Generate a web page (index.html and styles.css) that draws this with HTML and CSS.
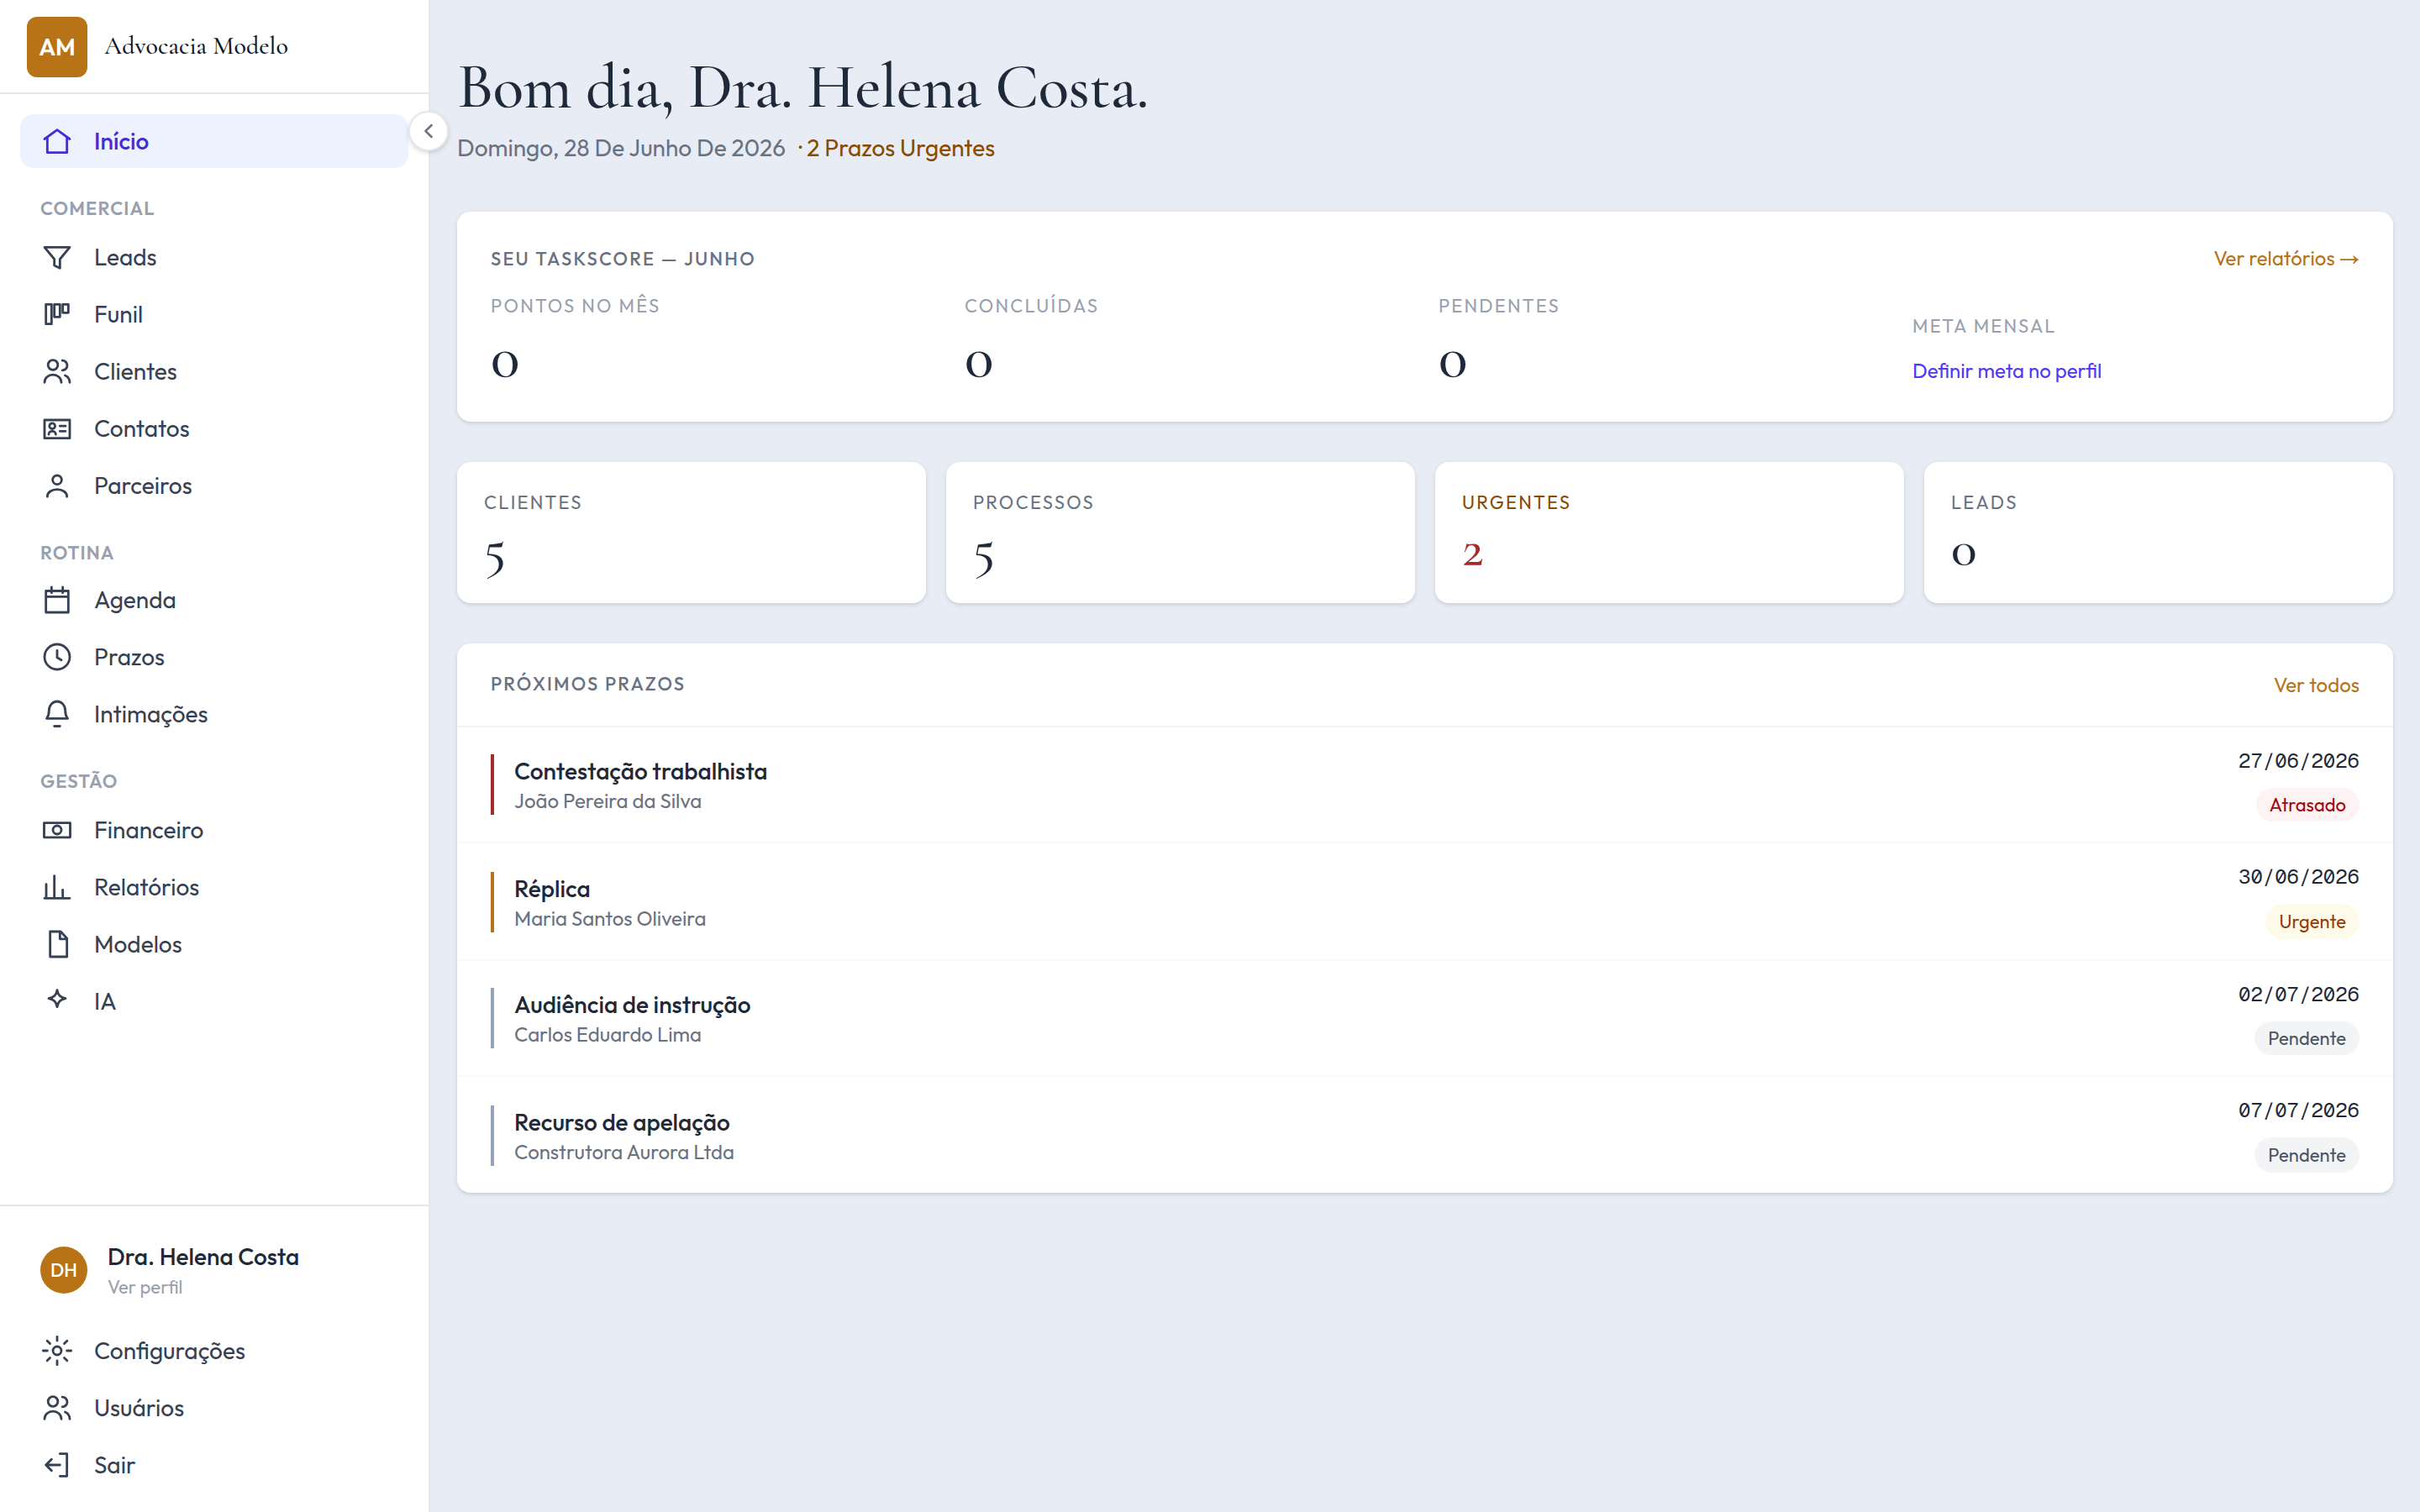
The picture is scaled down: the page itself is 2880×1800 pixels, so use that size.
FILE: index.html
```html
<!DOCTYPE html>
<html lang="pt-BR">
<head>
<meta charset="utf-8">
<title>Advocacia Modelo</title>
<link rel="stylesheet" href="styles.css">
</head>
<body>
<aside class="sidebar">
  <header class="brand"><span class="logo">AM</span><span class="brand-name">Advocacia Modelo</span></header>
  <button class="collapse" aria-label="Recolher"><svg viewBox="0 0 24 24"><path d="M15 6l-6 6 6 6"/></svg></button>
  <nav class="nav">
    <a class="item active"><svg viewBox="0 0 24 24"><path d="M3 10.5L12 4l9 6.5M5 9.5V20.2h14V9.5"/></svg>Início</a>
    <h2 class="group">Comercial</h2>
    <a class="item"><svg viewBox="0 0 24 24"><path d="M3 5h18l-7 8.5V20l-4-2v-4.500z"/></svg>Leads</a>
    <a class="item"><svg viewBox="0 0 24 24"><path d="M4 5h4v14H4zM10 5h4v9h-4zM16 5h4v6h-4z"/></svg>Funil</a>
    <a class="item"><svg viewBox="0 0 24 24"><circle cx="9" cy="7.500" r="3.500"/><path d="M3 20c0-3.300 2.700-5.500 6-5.500s6 2.200 6 5.500M15.700 4.300a3.500 3.500 0 0 1 0 7M17.700 15c2 .8 3.300 2.600 3.300 5"/></svg>Clientes</a>
    <a class="item"><svg viewBox="0 0 24 24"><path d="M3 6h18v13H3z"/><circle cx="8.500" cy="10.300" r="2"/><path d="M6 16.300c0-1.400 1.100-2.300 2.500-2.300s2.500.9 2.500 2.300M14 10.300h4M14 14h4"/></svg>Contatos</a>
    <a class="item"><svg viewBox="0 0 24 24"><circle cx="12" cy="8" r="3.200"/><path d="M5 20c0-3.200 3.100-5.200 7-5.200s7 2 7 5.200"/></svg>Parceiros</a>
    <h2 class="group short">Rotina</h2>
    <a class="item"><svg viewBox="0 0 24 24"><path d="M4 5.700h16V21H4zM4 9.800h16M8 3v4M16 3v4"/></svg>Agenda</a>
    <a class="item"><svg viewBox="0 0 24 24"><circle cx="12" cy="12" r="9"/><path d="M12 7.500v5l3 1.800"/></svg>Prazos</a>
    <a class="item"><svg viewBox="0 0 24 24"><path d="M4.500 15.200c1.200-1.500 1.700-3.400 1.700-5.700a5.800 6.500 0 0 1 11.600 0c0 2.300.5 4.200 1.700 5.700zM10 20.700h4"/></svg>Intimações</a>
    <h2 class="group">Gestão</h2>
    <a class="item"><svg viewBox="0 0 24 24"><path d="M2.700 7h18.600v10.300H2.700z"/><circle cx="12" cy="12" r="3"/></svg>Financeiro</a>
    <a class="item"><svg viewBox="0 0 24 24"><path d="M3 20h18M4.200 20V10M10 20V4M16 20v-6"/></svg>Relatórios</a>
    <a class="item"><svg viewBox="0 0 24 24"><path d="M7 3h7.500L19 7.800V21H7zM14 3v5.300h5"/></svg>Modelos</a>
    <a class="item"><svg viewBox="0 0 24 24"><path d="M12 4c.6 3.500 2 5.200 6 6-4 .8-5.400 2.500-6 6-.6-3.500-2-5.200-6-6 4-.8 5.400-2.500 6-6z"/></svg>IA</a>
  </nav>
  <footer class="account">
    <a class="user"><span class="avatar">DH</span><span class="who"><strong>Dra. Helena Costa</strong><small>Ver perfil</small></span></a>
    <a class="item"><svg viewBox="0 0 24 24"><circle cx="12" cy="12" r="3"/><path d="M12 2v2.800M12 19.200V22M2 12h3M19 12h3M4.900 4.900l2 2M17.100 17.100l2 2M4.900 19.100l2-2M17.100 6.900l2-2"/></svg>Configurações</a>
    <a class="item"><svg viewBox="0 0 24 24"><circle cx="9" cy="7.500" r="3.500"/><path d="M3 20c0-3.300 2.700-5.500 6-5.500s6 2.200 6 5.500M15.700 4.300a3.500 3.500 0 0 1 0 7M17.700 15c2 .8 3.300 2.600 3.300 5"/></svg>Usuários</a>
    <a class="item"><svg viewBox="0 0 24 24"><path d="M14 4h5v16h-5M14 12H4M8 8l-4 4 4 4"/></svg>Sair</a>
  </footer>
</aside>
<main class="main">
  <h1>Bom dia, Dra. Helena Costa.</h1>
  <p class="today">Domingo, 28 De Junho De 2026 <span class="alert">· 2 Prazos Urgentes</span></p>

  <section class="card score">
    <div class="head"><h3>Seu TaskScore — Junho</h3><a class="link">Ver relatórios <span class="arrow">→</span></a></div>
    <div class="metrics">
      <div><div class="label">Pontos no mês</div><div class="value">0</div></div>
      <div><div class="label">Concluídas</div><div class="value">0</div></div>
      <div><div class="label">Pendentes</div><div class="value">0</div></div>
      <div><div class="label">Meta mensal</div><a class="goal">Definir meta no perfil</a></div>
    </div>
  </section>

  <section class="stats">
    <div class="card stat"><div class="label">Clientes</div><div class="value">5</div></div>
    <div class="card stat"><div class="label">Processos</div><div class="value">5</div></div>
    <div class="card stat urgent"><div class="label">Urgentes</div><div class="value">2</div></div>
    <div class="card stat"><div class="label">Leads</div><div class="value">0</div></div>
  </section>

  <section class="card deadlines">
    <div class="head"><h3>Próximos prazos</h3><a class="link">Ver todos</a></div>
    <div class="row"><div class="case late"><b>Contestação trabalhista</b><span>João Pereira da Silva</span></div><div class="due"><time>27/06/2026</time><span class="badge red">Atrasado</span></div></div>
    <div class="row"><div class="case soon"><b>Réplica</b><span>Maria Santos Oliveira</span></div><div class="due"><time>30/06/2026</time><span class="badge amber">Urgente</span></div></div>
    <div class="row"><div class="case"><b>Audiência de instrução</b><span>Carlos Eduardo Lima</span></div><div class="due"><time>02/07/2026</time><span class="badge">Pendente</span></div></div>
    <div class="row"><div class="case"><b>Recurso de apelação</b><span>Construtora Aurora Ltda</span></div><div class="due"><time>07/07/2026</time><span class="badge">Pendente</span></div></div>
  </section>
</main>
</body>
</html>
```
FILE: styles.css
```css
* { box-sizing: border-box; margin: 0; padding: 0; }
body {
  display: flex;
  width: 2880px;
  height: 1800px;
  overflow: hidden;
  background: #e8edf5;
  color: #1e2939;
  font: 400 28px/40px Outfit, Lato, sans-serif;
}
svg { fill: none; stroke: currentColor; stroke-width: 1.7; stroke-linecap: round; stroke-linejoin: round; }

.sidebar {
  position: relative;
  flex: none;
  display: flex;
  flex-direction: column;
  width: 512px;
  background: #fff;
  border-right: 2px solid #e5e7eb;
}
.brand {
  display: flex;
  align-items: center;
  gap: 20px;
  height: 112px;
  padding: 0 32px;
  border-bottom: 2px solid #e5e7eb;
}
.logo {
  display: grid;
  place-items: center;
  width: 72px;
  height: 72px;
  margin-top: 2px;
  border-radius: 12px;
  background: #b87316;
  color: #fff;
  font-weight: 600;
}
.brand-name { color: #101828; font: 500 30px/40px "Cormorant Garamond", "Liberation Serif", serif; }
.collapse {
  position: absolute;
  top: 132px;
  right: -24px;
  display: grid;
  place-items: center;
  width: 48px;
  height: 48px;
  border: 2px solid #e5e7eb;
  border-radius: 50%;
  background: #fff;
  color: #6a7282;
  box-shadow: 0 2px 6px rgba(0, 0, 0, .1), 0 2px 4px rgba(0, 0, 0, .06);
}
.collapse svg { width: 28px; height: 28px; stroke-width: 2.2; }
.nav { flex: 1; padding: 24px; }
.item {
  display: flex;
  align-items: center;
  gap: 24px;
  height: 64px;
  margin-bottom: 4px;
  padding: 0 24px;
  border-radius: 16px;
  color: #364153;
}
.item svg { flex: none; width: 40px; height: 40px; }
.item.active { background: #eef2ff; color: #432dd7; font-weight: 500; }
.item:has(+ .group) { margin-bottom: 0; }
.group {
  height: 74px;
  padding: 32px 24px 0;
  color: #99a1af;
  font-size: 22px;
  font-weight: 600;
  line-height: 32px;
  letter-spacing: 1.1px;
  text-transform: uppercase;
}
.group.short { height: 72px; }

.account { height: 366px; padding: 32px 24px 0; border-top: 2px solid #e5e7eb; }
.user { display: flex; align-items: center; gap: 24px; height: 88px; margin-bottom: 20px; padding: 0 24px; }
.avatar {
  display: grid;
  place-items: center;
  width: 56px;
  height: 56px;
  border-radius: 50%;
  background: #b87316;
  color: #fff;
  font-size: 22px;
  font-weight: 500;
}
.who { display: grid; }
.who strong { font-weight: 500; line-height: 40px; }
.who small { color: #99a1af; font-size: 22px; line-height: 32px; }

.main { flex: 1; padding: 62px 32px 0; }
h1 { font: 500 76px/82px "Cormorant Garamond", "Liberation Serif", serif; letter-spacing: -.76px; }
.today { margin: 12px 0 56px; color: #6a7282; }
.alert { margin-left: 10px; color: #894b00; }
.card {
  border-radius: 16px;
  background: #fff;
  box-shadow: 0 2px 6px rgba(0, 0, 0, .1), 0 2px 4px -2px rgba(0, 0, 0, .1);
}
.head { display: flex; justify-content: space-between; align-items: center; }
h3 { color: #6a7282; font-size: 22px; font-weight: 500; line-height: 32px; letter-spacing: 2.2px; text-transform: uppercase; }
.link { color: #b87316; font-size: 24px; line-height: 32px; }
.arrow { font-family: "Noto Sans Math", "DejaVu Sans", sans-serif; line-height: 1; }
.label { color: #6a7282; font-size: 22px; line-height: 32px; letter-spacing: 2.2px; text-transform: uppercase; }
.value { font: 500 72px/72px "Cormorant Garamond", "Liberation Serif", serif; }

.score { height: 250px; padding: 40px; }
.score .head { height: 32px; }
.score .link { margin-top: -2px; }
.metrics { display: grid; grid-template-columns: repeat(4, 1fr); gap: 32px; align-items: end; margin-top: 24px; }
.metrics .label { color: #99a1af; }
.metrics .value { margin: 8px 0 2px; }
.goal { display: block; margin-top: 21px; padding-bottom: 5px; color: #4f39f6; font-size: 24px; line-height: 32px; }

.stats { display: grid; grid-template-columns: repeat(4, 1fr); gap: 24px; margin: 48px 0; }
.stat { height: 168px; padding: 32px; }
.stat .value { margin-top: 6px; font-size: 64px; line-height: 64px; }
.urgent .label { color: #894b00; }
.urgent .value { color: #a52a2a; }

.deadlines .head { height: 100px; padding: 0 40px; border-bottom: 2px solid #f3f4f6; }
.deadlines h3 { margin-bottom: 2px; }
.row {
  display: flex;
  justify-content: space-between;
  align-items: center;
  height: 138px;
  padding: 0 40px;
  border-bottom: 2px solid #f9fafb;
}
.row:nth-of-type(3) { height: 140px; }
.row:last-child { border-bottom: 0; }
.case { display: flex; flex-direction: column; height: 72px; padding-left: 24px; border-left: 4px solid #94a3b8; }
.case.late { border-color: #a52a2a; }
.case.soon { border-color: #b87316; }
.case b { font-weight: 500; line-height: 40px; }
.case span { color: #6a7282; font-size: 24px; line-height: 30px; }
.due { display: flex; flex-direction: column; align-items: flex-end; gap: 16px; }
time { font: 24px/32px "Geist Mono", "Liberation Mono", monospace; }
.badge { height: 40px; padding: 0 16px; border-radius: 21px; background: #f3f4f6; color: #4a5565; font-size: 22px; line-height: 40px; }
.badge.red { background: #fef2f2; color: #9f0712; }
.badge.amber { background: #fffbeb; color: #973c00; }
.row:nth-of-type(odd) .case { margin-top: 2px; }
.row:nth-of-type(odd) .badge { height: 42px; line-height: 42px; }
```
